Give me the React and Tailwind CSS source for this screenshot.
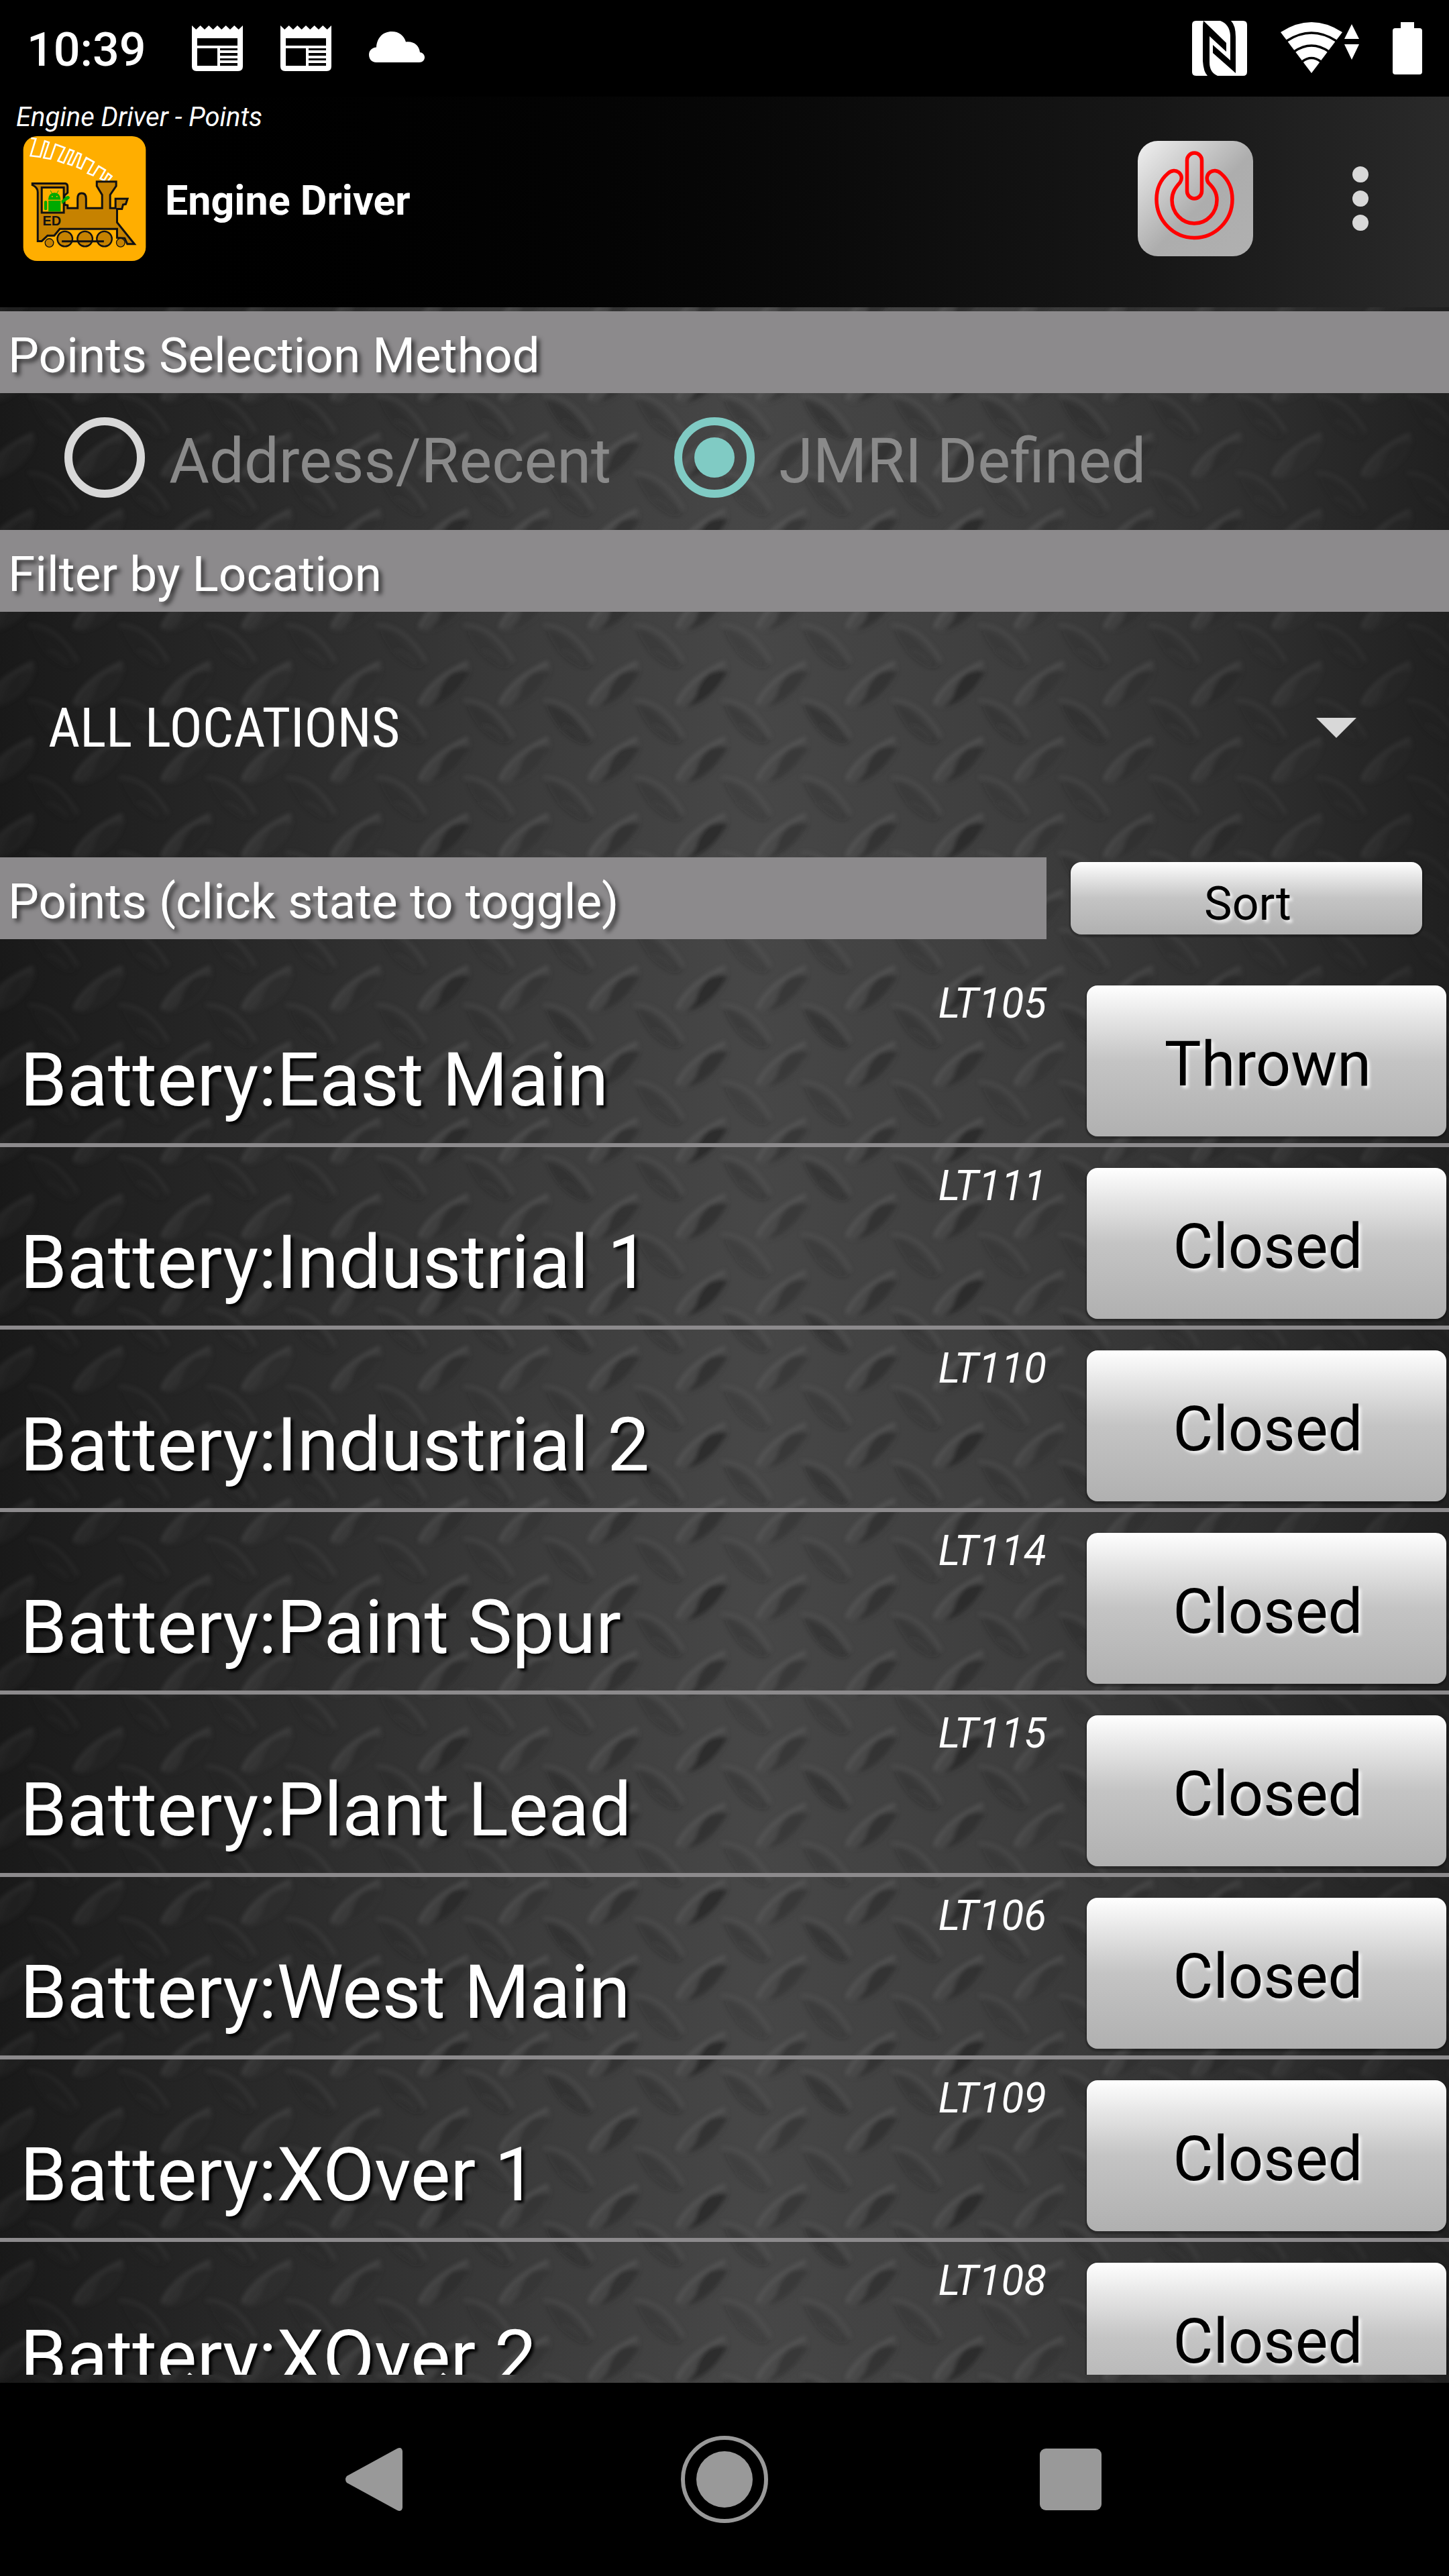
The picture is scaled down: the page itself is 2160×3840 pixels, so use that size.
import React, { useState } from "react";

const POINTS = [
  { id: "LT105", name: "Battery:East Main", state: "Thrown" },
  { id: "LT111", name: "Battery:Industrial 1", state: "Closed" },
  { id: "LT110", name: "Battery:Industrial 2", state: "Closed" },
  { id: "LT114", name: "Battery:Paint Spur", state: "Closed" },
  { id: "LT115", name: "Battery:Plant Lead", state: "Closed" },
  { id: "LT106", name: "Battery:West Main", state: "Closed" },
  { id: "LT109", name: "Battery:XOver 1", state: "Closed" },
  { id: "LT108", name: "Battery:XOver 2", state: "Closed" },
];

const BUTTON_FACE =
  "rounded-2xl bg-linear-to-b from-white via-[#c4c4c4] to-[#b0b0b0] text-black shadow-[0_2px_2px_2px_#00000040] [text-shadow:4px_4px_4px_#ffffffcc]";

function NewsIcon() {
  return (
    <svg viewBox="0 0 76 68" className="h-[68px] w-[76px]" aria-hidden="true">
      <path
        fill="#fff"
        fillRule="evenodd"
        d="M0 0l6.3 6 6.4-6L19 6l6.3-6 6.4 6L38 0l6.3 6 6.4-6L57 6l6.3-6 6.4 6L76 0v61q0 7-7 7H7q-7 0-7-7ZM8 19v11h60V19ZM8 34v26h30V34ZM42 34v3h26v-3ZM42 41v4h26v-4ZM42 49v3h26v-3ZM42 56v4h26v-4Z"
      />
    </svg>
  );
}

function CloudIcon() {
  return (
    <svg viewBox="0 0 83 46" className="-mt-1 h-[46px] w-[83px]" aria-hidden="true">
      <path
        fill="#fff"
        d="M11 46C4 46 0 41 0 34.500 0 28 5 24 11 23.500 12 9 21 0 34 0c11 0 18 6 21 15.500C67 14 75 21 76 31c4 .5 7 3.500 7 7.500 0 4.500-3.500 7.500-8 7.500Z"
      />
    </svg>
  );
}

function NfcIcon() {
  return (
    <svg viewBox="0 0 82 82" className="size-[82px]" aria-hidden="true">
      <path fill="#fff" d="M6 0H17Q16 4 16 10V60Q17 76 23 82H6Q0 82 0 76V6Q0 0 6 0Z" />
      <path fill="#fff" d="M17 0H42Q56 5 57 22V59L31 36V48L65 78V24Q65 7 58 0H76Q82 0 82 6V76Q82 82 76 82H38Q26 77 26 62V23L51 46V33Z" />
    </svg>
  );
}

function WifiIcon() {
  return (
    <svg viewBox="0 0 117 78" className="h-[78px] w-[117px]" aria-hidden="true">
      <path fill="#fff" d="M0 15Q46-15 92 15L46 76Z" />
      <g fill="none" stroke="#000" strokeWidth="3.500">
        <path d="M9 28Q46 4 83 28" />
        <path d="M20 44Q46 26 72 44" />
        <path d="M32 59Q46 48 60 59" />
      </g>
      <path fill="#fff" d="M106 3l11 22H95ZM106 56L95 33h22Z" />
    </svg>
  );
}

function BatteryIcon() {
  return (
    <svg viewBox="0 0 44 78" className="h-[78px] w-[44px]" aria-hidden="true">
      <path fill="#fff" d="M12 0h20v9h8q4 0 4 4v61q0 4-4 4H4q-4 0-4-4V13q0-4 4-4h8Z" />
    </svg>
  );
}

function LocomotiveIcon() {
  return (
    <svg viewBox="43 38 550 560" className="h-[186px] w-[184px]" aria-hidden="true">
      <rect x="43" y="38" width="550" height="560" rx="62" fill="#ffae00" />
      <path
        fill="none"
        stroke="#fff"
        strokeWidth="8"
        d="M78 47L99 50 76 126 119 131 140 60 158 66 135 135 165 140 188 75 229 90 199 149 224 158 252 98 270 105 243 162 261 168 288 113 303 119 284 176 302 184 326 135 360 154 332 204 356 214 382 173 411 190 389 228 406 236 424 206 440 218 424 238"
      />
      <g stroke="#111" strokeWidth="9" strokeLinejoin="miter">
        <path
          fill="#c68200"
          fillRule="evenodd"
          d="M84 250H232q10 2 10 14v28l-14 12v42l14 2v13H287V318q0-24 18-24 20 0 20 24v43H397V301L373 262V242H460V262L433 301V361H457V319H511l-8 24-12 2-5 20H464V425L542 522H510l-12-26-34-2V454H207L182 484H152L126 509H108V290Q108 268 84 257ZM126 268V381H225V268Z"
        />
        <circle cx="230" cy="499" r="34" fill="#c68200" strokeWidth="7" />
        <circle cx="320" cy="499" r="34" fill="#c68200" strokeWidth="7" />
        <circle cx="407" cy="499" r="34" fill="#c68200" strokeWidth="7" />
        <circle cx="160" cy="517" r="19" fill="#c68200" strokeWidth="4" />
        <circle cx="480" cy="516" r="19" fill="#c68200" strokeWidth="4" />
        <path fill="none" d="M216 510H405" />
      </g>
      <g fill="#0a0">
        <path d="M155 323q2-30 28-31 26 1 28 31ZM156 327h55v49H156Z" />
        <rect x="137" y="328" width="13" height="42" rx="5" />
        <path d="M214 328l22-20q14-6 16 6-2 6-8 8l-28 20Z" />
        <path d="M165 282l8 14M201 282l-8 14" stroke="#0a0" strokeWidth="3" />
      </g>
      <circle cx="173" cy="309" r="3" fill="#ffae00" />
      <circle cx="194" cy="309" r="3" fill="#ffae00" />
      <text x="130" y="438" fill="#111" fontSize="60" fontWeight="700" fontFamily="Liberation Sans, sans-serif">
        ED
      </text>
    </svg>
  );
}

function PowerIcon() {
  return (
    <svg viewBox="0 0 172 172" className="size-[172px]" aria-hidden="true">
      <defs>
        <linearGradient id="powerFace" x1="0" y1="0" x2="1" y2="1">
          <stop offset="0.05" stopColor="#ebebeb" />
          <stop offset="0.55" stopColor="#adadad" />
          <stop offset="1" stopColor="#b0b0b0" />
        </linearGradient>
      </defs>
      <rect width="172" height="172" rx="30" fill="url(#powerFace)" />
      <g fill="none" stroke="#f00" strokeWidth="5.500">
        <rect x="73.500" y="18" width="22" height="68" rx="11" />
        <path d="M45 48.500C34 58 28 71 28 87a56.500 57.500 0 0 0 113 0C141 71 135 58 124 48.500 113 38 98 50 105 62 113 70 118 77 118 88a33.500 35 0 0 1-67 0C51 77 56 70 63 62 71 50 56 38 45 48.500Z" />
      </g>
    </svg>
  );
}

const SLASHES = [
  [47, 133, 0.6],
  [167, 133, 0.4],
  [300, 133, 0.55],
  [47, 20, 0.7],
  [167, 20, 0.45],
  [300, 20, 0.5],
  [47, 247, 0.7],
  [167, 247, 0.45],
  [300, 247, 0.5],
];

const BACKSLASHES = [
  [-17, 77, 0.4],
  [113, 77, 0.4],
  [232, 77, 0.65],
  [367, 77, 0.4],
  [-17, 192, 0.35],
  [113, 192, 0.3],
  [232, 192, 0.35],
  [367, 192, 0.35],
];

/* Diamond-plate metal that lies behind the whole content area. */
function TreadPlate() {
  return (
    <svg className="absolute inset-0 size-full" aria-hidden="true">
      <defs>
        <filter id="soften" x="-20%" y="-20%" width="140%" height="140%">
          <feGaussianBlur stdDeviation="3" />
        </filter>
        <linearGradient id="plateLight" x1="0" x2="1" y1="0" y2="0">
          <stop offset="0" stopColor="#191919" />
          <stop offset="0.2" stopColor="#2b2b2b" />
          <stop offset="0.37" stopColor="#3c3c3c" />
          <stop offset="0.52" stopColor="#474747" />
          <stop offset="0.7" stopColor="#3e3e3e" />
          <stop offset="0.85" stopColor="#303030" />
          <stop offset="1" stopColor="#202020" />
        </linearGradient>
        <linearGradient id="treadFade" x1="0" x2="1" y1="0" y2="0">
          <stop offset="0" stopColor="#fff" stopOpacity="0.35" />
          <stop offset="0.4" stopColor="#fff" stopOpacity="0.85" />
          <stop offset="0.65" stopColor="#fff" stopOpacity="0.85" />
          <stop offset="1" stopColor="#fff" stopOpacity="0.3" />
        </linearGradient>
        <mask id="treadMask">
          <rect width="100%" height="100%" fill="url(#treadFade)" />
        </mask>
        <pattern id="treads" width="384" height="227" x="232" y="89" patternUnits="userSpaceOnUse">
          <g filter="url(#soften)">
            {SLASHES.map(([x, y, o], i) => (
              <g key={i} transform={`translate(${x} ${y})`}>
                <path d="M-39 30Q-30 2 34-34 44-14 12 16-18 40-39 30Z" fill="#505050" opacity="0.55" />
                <path d="M-26 33Q12 28 38-20 28-24 10-18-6-4-10 16-16 26-26 33Z" fill="#1c1c1c" opacity={o} />
                <path d="M-38 28Q-24-8 34-34" fill="none" stroke="#6c6c6c" strokeWidth="4" opacity="0.6" />
              </g>
            ))}
            {BACKSLASHES.map(([x, y, o], i) => (
              <g key={i} transform={`translate(${x} ${y})`}>
                <path d="M-34-28Q-10-26 8-4 24 16 34 26 26 36 6 24-20 8-34-28Z" fill="#1c1c1c" opacity={o * 0.75} />
                <path d="M-10 4Q8 6 20 24" fill="none" stroke="#505050" strokeWidth="4" opacity="0.4" />
                <path d="M-38-34Q4-36 36 20" fill="none" stroke="#606060" strokeWidth="4" opacity="0.5" />
              </g>
            ))}
          </g>
        </pattern>
      </defs>
      <rect width="100%" height="100%" fill="url(#plateLight)" />
      <rect width="100%" height="100%" fill="url(#treads)" mask="url(#treadMask)" />
    </svg>
  );
}

function SectionTitle({ children, className = "" }) {
  return (
    <h2
      className={`bg-[#8c8a8c] pt-[21px] pr-4 pb-[11px] pl-3 text-[73px] leading-[90px] text-white [text-shadow:5px_5px_6px_#00000099] ${className}`}
    >
      {children}
    </h2>
  );
}

function MethodRadio({ label, value, selected, onSelect }) {
  return (
    <label className="flex items-center gap-9 text-[#8a8a8a]">
      <input
        type="radio"
        name="method"
        value={value}
        checked={selected}
        onChange={() => onSelect(value)}
        className="grid size-[120px] appearance-none place-items-center rounded-full border-12 border-[#d8d8d8] before:size-[60px] before:rounded-full checked:border-[#80cbc4] checked:before:bg-[#80cbc4]"
      />
      <span className="pt-3 text-[92px] leading-[108px]">{label}</span>
    </label>
  );
}

function PointRow({ point, onToggle }) {
  return (
    <li className="flex h-[272px] shrink-0 border-b-6 border-[#8c8a8c] pr-1">
      <div className="flex min-w-0 flex-1 flex-col gap-5 pt-6 pl-[30px] text-white">
        <span className="self-end text-[62px] leading-[68px] italic">{point.id}</span>
        <span className="text-[112px] leading-[120px] whitespace-nowrap [text-shadow:4px_4px_4px_#000000]">
          {point.name}
        </span>
      </div>
      <button
        type="button"
        onClick={onToggle}
        className={`mt-[31px] ml-[60px] h-[225px] w-[536px] pt-2.5 pl-1 text-[92px] leading-[108px] ${BUTTON_FACE}`}
      >
        {point.state}
      </button>
    </li>
  );
}

export default function App() {
  const [method, setMethod] = useState("jmri");
  const [points, setPoints] = useState(POINTS);

  const toggle = (id) =>
    setPoints((list) =>
      list.map((p) => (p.id === id ? { ...p, state: p.state === "Closed" ? "Thrown" : "Closed" } : p)),
    );
  const sort = () => setPoints((list) => [...list].sort((a, b) => a.id.localeCompare(b.id)));

  return (
    <div className="flex h-screen flex-col overflow-hidden bg-black font-[Roboto,sans-serif] text-white">
      <div className="flex h-36 shrink-0 items-center justify-between px-10">
        <div className="flex items-center">
          <span className="pt-1 text-[70px] leading-[84px] font-medium">10:39</span>
          <div className="ml-[68px] flex items-center gap-14">
            <NewsIcon />
            <NewsIcon />
            <CloudIcon />
          </div>
        </div>
        <div className="flex items-center gap-[50px]">
          <NfcIcon />
          <WifiIcon />
          <BatteryIcon />
        </div>
      </div>

      <header className="shrink-0 bg-linear-to-r from-black via-[#171717] via-80% to-[#2a2a2a] pt-[7px] pb-[69px]">
        <p className="pl-6 text-[40px] leading-[48px] italic">Engine Driver - Points</p>
        <div className="mt-1 flex items-center justify-between pr-[84px] pl-[34px]">
          <div className="flex items-center gap-7">
            <LocomotiveIcon />
            <h1 className="pt-1.5 text-[61px] leading-[72px] font-bold">Engine Driver</h1>
          </div>
          <div className="flex items-center gap-[112px]">
            <button type="button" aria-label="Track power">
              <PowerIcon />
            </button>
            <button type="button" aria-label="More options" className="flex w-24 flex-col items-center gap-3">
              <span className="size-6 rounded-full bg-[#d8d8d8]" />
              <span className="size-6 rounded-full bg-[#d8d8d8]" />
              <span className="size-6 rounded-full bg-[#d8d8d8]" />
            </button>
          </div>
        </div>
      </header>

      <main className="relative min-h-0 flex-1">
        <TreadPlate />
        <div className="relative flex h-full flex-col pt-1.5 pb-3">
          <SectionTitle>Points Selection Method</SectionTitle>
          <div role="radiogroup" aria-label="Points Selection Method" className="flex h-[204px] shrink-0 items-center gap-[94px] px-24 pb-3">
            <MethodRadio label="Address/Recent" value="address" selected={method === "address"} onSelect={setMethod} />
            <MethodRadio label="JMRI Defined" value="jmri" selected={method === "jmri"} onSelect={setMethod} />
          </div>

          <SectionTitle>Filter by Location</SectionTitle>
          <div className="flex h-[366px] shrink-0 items-center pr-[138px] pl-[72px] pb-6">
            <select
              aria-label="Filter by Location"
              className="min-w-0 flex-1 appearance-none bg-transparent pt-1 font-['Roboto_Condensed',Roboto,sans-serif] text-[82px] leading-[100px] text-white"
            >
              <option>ALL LOCATIONS</option>
            </select>
            <svg viewBox="0 0 60 30" className="mt-1 h-[30px] w-[60px]" aria-hidden="true">
              <path d="M0 0h60L30 30Z" fill="#d8d8d8" />
            </svg>
          </div>

          <div className="flex shrink-0 items-center pr-10">
            <SectionTitle className="flex-1">Points (click state to toggle)</SectionTitle>
            <button
              type="button"
              onClick={sort}
              className={`ml-9 h-[108px] w-[524px] pt-4 pl-1 text-[70px] leading-[80px] ${BUTTON_FACE}`}
            >
              Sort
            </button>
          </div>

          <ul className="mt-[38px] flex min-h-0 flex-1 flex-col overflow-hidden">
            {points.map((p) => (
              <PointRow key={p.id} point={p} onToggle={() => toggle(p.id)} />
            ))}
          </ul>
        </div>
      </main>

      <nav aria-label="System" className="flex h-72 shrink-0 items-center justify-center gap-96">
        <button type="button" aria-label="Back">
          <svg viewBox="0 0 132 132" className="size-[132px]">
            <path d="M19 71q-4-5 0-10L94 20q7-3 8 4v84q-1 7-8 4Z" fill="#999" />
          </svg>
        </button>
        <button type="button" aria-label="Home">
          <svg viewBox="0 0 132 132" className="size-[132px]">
            <circle cx="66" cy="66" r="62" fill="none" stroke="#999" strokeWidth="6" />
            <circle cx="66" cy="66" r="42" fill="#999" />
          </svg>
        </button>
        <button type="button" aria-label="Overview">
          <svg viewBox="0 0 132 132" className="size-[132px]">
            <rect x="20" y="20" width="92" height="92" rx="9" fill="#999" />
          </svg>
        </button>
      </nav>
    </div>
  );
}
